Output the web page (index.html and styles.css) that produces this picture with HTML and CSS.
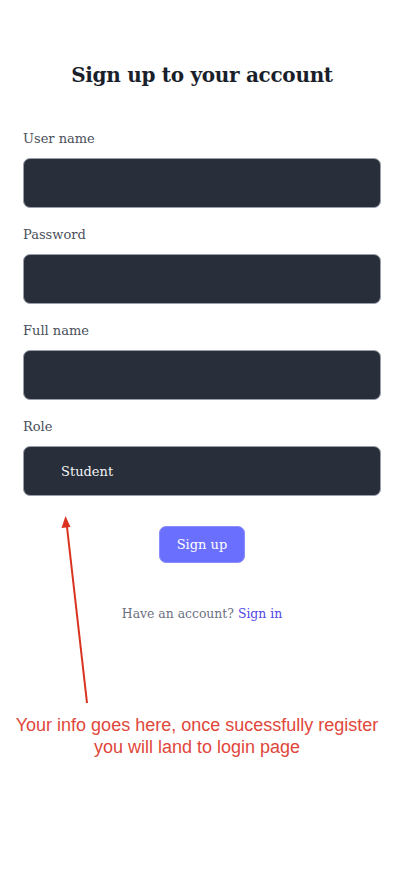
FILE: index.html
```html
<!DOCTYPE html>
<html>
<head>
<meta charset="utf-8">
<link rel="stylesheet" href="styles.css">
</head>
<body>
<main class="page">
  <h1 class="title">Sign up to your account</h1>
  <form class="form">
    <div class="field">
      <label class="label">User name</label>
      <div class="input"></div>
    </div>
    <div class="field">
      <label class="label">Password</label>
      <div class="input"></div>
    </div>
    <div class="field">
      <label class="label">Full name</label>
      <div class="input"></div>
    </div>
    <div class="field">
      <label class="label">Role</label>
      <div class="input select"><span>Student</span></div>
    </div>
    <div class="actions">
      <button type="button" class="btn">Sign up</button>
    </div>
    <p class="alt">Have an account? <a class="link">Sign in</a></p>
  </form>
  <svg class="arrow" width="404" height="875" viewBox="0 0 404 875">
    <line x1="87" y1="703" x2="67" y2="527" stroke="#d9321f" stroke-width="2"/>
    <polygon points="65.5,516 61.5,528 70.5,527" fill="#d9321f"/>
  </svg>
  <p class="note">Your info goes here, once sucessfully register<br>you will land to login page</p>
</main>
</body>
</html>
```
FILE: styles.css
```css
* { box-sizing: border-box; }
html, body { margin: 0; padding: 0; background: #fff; }
.page {
  position: relative;
  width: 404px;
  height: 875px;
  font-family: "DejaVu Serif", serif;
  padding: 61px 23px 0;
}
.title {
  margin: 0;
  text-align: center;
  font-family: "DejaVu Serif", serif;
  font-size: 20px;
  line-height: 28px;
  font-weight: bold;
  color: #1a1f2b;
  letter-spacing: -0.3px;
}
.form { margin-top: 40px; display: flex; flex-direction: column; gap: 17px; }
.field { display: flex; flex-direction: column; gap: 9px; }
.label {
  font-size: 13px;
  line-height: 20px;
  color: #4a4f5a;
}
.input {
  height: 50px;
  background: #282e3a;
  border: 1px solid #9aa0ab;
  border-radius: 7px;
  display: flex;
  align-items: center;
}
.select span {
  padding-left: 37px;
  color: #f3f4f6;
  font-size: 13px;
}
.actions { display: flex; justify-content: center; margin-top: 13px; }
.btn {
  width: 86px;
  height: 37px;
  background: #6b6ffd;
  border: 1px solid #8a8dfc;
  border-radius: 7px;
  color: #fff;
  font-family: "DejaVu Serif", serif;
  font-size: 13px;
}
.alt {
  margin: 26px 0 0;
  text-align: center;
  font-size: 12.4px;
  color: #6b7080;
}
.link { color: #4f46e5; }
.arrow { position: absolute; left: 0; top: 0; pointer-events: none; }
.note {
  position: absolute;
  left: 0;
  top: 714px;
  width: 394px;
  margin: 0;
  text-align: center;
  font-family: "Liberation Sans", sans-serif;
  font-size: 18px;
  line-height: 22px;
  color: #e0473b;
}
```
